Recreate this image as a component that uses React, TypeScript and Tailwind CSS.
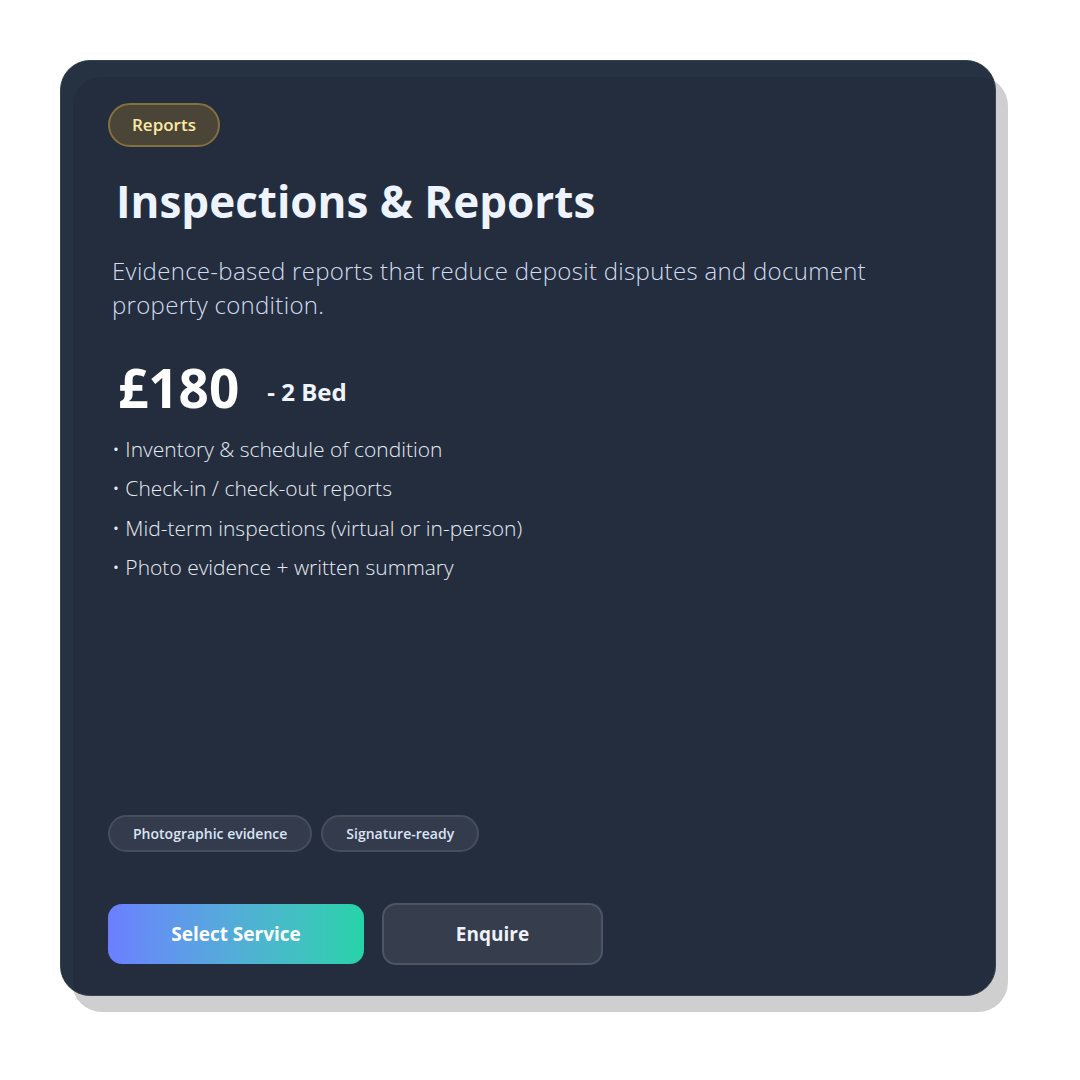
const features = [
  "Inventory & schedule of condition",
  "Check-in / check-out reports",
  "Mid-term inspections (virtual or in-person)",
  "Photo evidence + written summary",
];

const tags = ["Photographic evidence", "Signature-ready"];

const ServiceCard = () => {
  return (
    <div className="flex h-[936px] w-[936px] flex-col rounded-[30px] border border-[#374253] bg-[#232d3d] px-[47px] pt-[42px] pb-[30px] shadow-[12px_16px_0_#cfcfcf,inset_12px_16px_0_#263142]">
      <div>
        <span className="inline-flex h-[44px] items-center rounded-full border-2 border-[#85703f] bg-[#4a4536] px-[22px] text-[17px] font-semibold text-[#fde9a6]">
          Reports
        </span>
      </div>

      <h2 className="mt-[28px] pl-[8px] text-[44px] font-bold leading-[1.2] text-[#eef4ff]">
        Inspections &amp; Reports
      </h2>

      <p className="mt-[26px] pl-[4px] pr-[60px] text-[24px] font-light leading-[34px] tracking-[0.3px] text-[#d2dcf0]">
        Evidence-based reports that reduce deposit disputes and document
        property condition.
      </p>

      <div className="mt-[39px] flex items-center gap-[28px] pl-[10px]">
        <span className="text-[53px] font-bold leading-none text-white">£180</span>
        <span className="pt-[10px] text-[24px] font-bold leading-none text-[#eef4ff]">- 2 Bed</span>
      </div>

      <ul className="mt-[21px] space-y-[11px] pl-[4px] text-[21px] font-light leading-[28.5px] text-[#e5ebf5]">
        {features.map((item) => (
          <li key={item}>•&nbsp;{item}</li>
        ))}
      </ul>

      <div className="mt-auto flex gap-[9px]">
        {tags.map((tag) => (
          <span
            key={tag}
            className="inline-flex h-[37px] items-center rounded-full border-2 border-[#464e5e] bg-[#333b4d] px-[23px] text-[14px] font-semibold text-[#dbe4f5]"
          >
            {tag}
          </span>
        ))}
      </div>

      <div className="mt-[51px] flex items-center gap-[18px]">
        <button className="h-[60px] w-[256px] rounded-[14px] bg-gradient-to-r from-[#6b7fff] to-[#25d3a8] text-[19px] font-bold text-white">
          Select Service
        </button>
        <button className="h-[62px] w-[221px] rounded-[14px] border-2 border-[#4d5565] bg-[#363d4c] text-[19px] font-bold text-[#eef2fa]">
          Enquire
        </button>
      </div>
    </div>
  );
};

export default function App() {
  return (
    <div className="min-h-screen bg-white pt-[60px] pl-[60px] font-['Open_Sans','Noto_Sans',sans-serif]">
      <ServiceCard />
    </div>
  );
}
